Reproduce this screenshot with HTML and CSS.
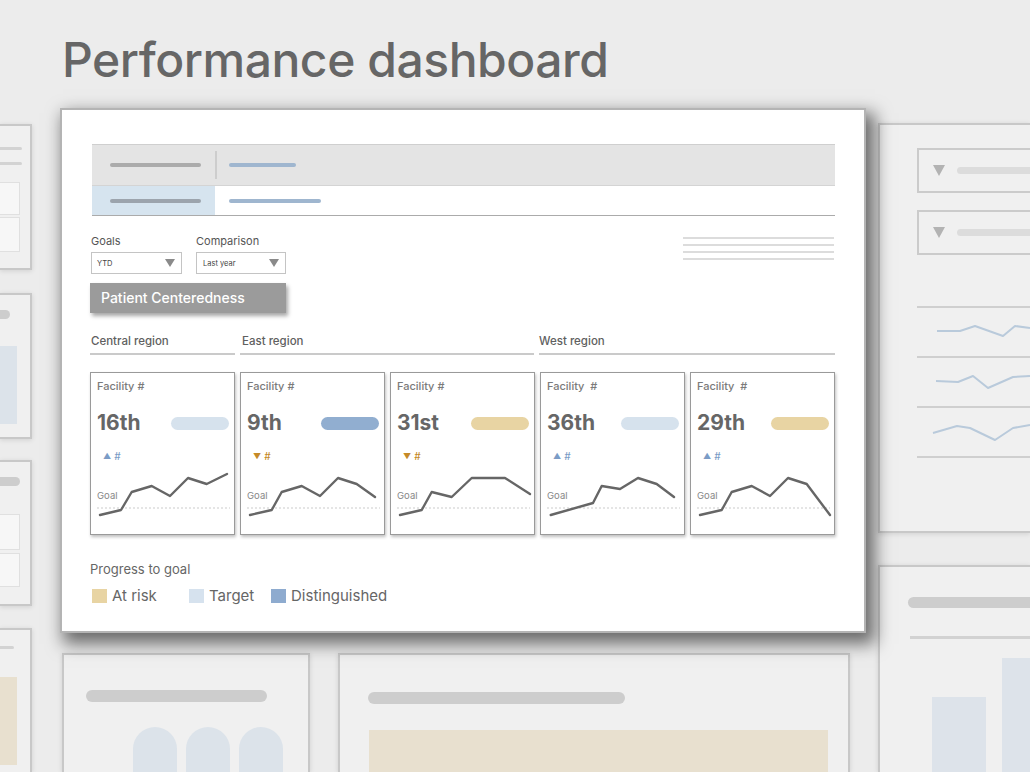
FILE: index.html
```html
<!DOCTYPE html>
<html lang="en">

<head>
    <meta charset="UTF-8">
    <meta name="viewport" content="width=device-width, initial-scale=1.0">
    <title>Performance dashboard</title>
    <link rel="stylesheet" href="styles.css">
</head>

<body>
    <!-- background windows -->
    <div class="ghost ghost-left ghost-l1">
        <span class="g-line"></span>
        <span class="g-line"></span>
        <span class="g-box g-box-a"></span>
        <span class="g-box g-box-b"></span>
    </div>
    <div class="ghost ghost-left ghost-l2">
        <span class="g-pill"></span>
        <span class="g-fill g-fill-blue"></span>
    </div>
    <div class="ghost ghost-left ghost-l3">
        <span class="g-pill"></span>
        <span class="g-box g-box-c"></span>
        <span class="g-box g-box-d"></span>
    </div>
    <div class="ghost ghost-left ghost-l4">
        <span class="g-line"></span>
        <span class="g-fill g-fill-tan"></span>
    </div>

    <div class="ghost ghost-right ghost-r1">
        <div class="g-drop"><span class="g-caret"></span><span class="g-drop-bar"></span></div>
        <div class="g-drop"><span class="g-caret"></span><span class="g-drop-bar"></span></div>
        <div class="g-sparks">
            <div class="g-spark-row">
                <svg width="113" height="48" viewBox="0 0 113 48">
                    <polyline points="20,23 43,23 58,18 86,28 98,18 113,20" />
                </svg>
            </div>
            <div class="g-spark-row">
                <svg width="113" height="48" viewBox="0 0 113 48">
                    <polyline points="19,23 41,24 56,18 71,30 96,19 113,18" />
                </svg>
            </div>
            <div class="g-spark-row">
                <svg width="113" height="48" viewBox="0 0 113 48">
                    <polyline points="16,25 40,18 53,20 78,32 96,20 113,17" />
                </svg>
            </div>
        </div>
    </div>
    <div class="ghost ghost-right ghost-bottom ghost-r2">
        <span class="g-pill g-pill-wide"></span>
        <span class="g-rule"></span>
        <div class="g-bars">
            <span class="g-bar g-bar-low"></span>
            <span class="g-bar g-bar-high"></span>
        </div>
    </div>

    <div class="ghost ghost-bottom ghost-b1">
        <span class="g-pill g-pill-title"></span>
        <div class="g-arches">
            <span></span><span></span><span></span>
        </div>
    </div>
    <div class="ghost ghost-bottom ghost-b2">
        <span class="g-pill g-pill-title"></span>
        <span class="g-fill g-fill-wide"></span>
    </div>

    <h1 class="title">Performance dashboard</h1>

    <div class="board">
        <div class="tabs">
            <div class="tab-row tab-row-top">
                <div class="tab-cell"><span class="bar bar-gray"></span></div>
                <span class="tab-sep"></span>
                <span class="bar bar-blue bar-short"></span>
            </div>
            <div class="tab-row tab-row-sub">
                <div class="tab-cell tab-cell-active"><span class="bar bar-slate"></span></div>
                <span class="bar bar-blue bar-long"></span>
            </div>
        </div>

        <div class="filters">
            <div class="filter-group">
                <div class="selects">
                    <div class="field">
                        <span class="field-label">Goals</span>
                        <span class="select">YTD</span>
                    </div>
                    <div class="field field-wide">
                        <span class="field-label">Comparison</span>
                        <span class="select">Last year</span>
                    </div>
                </div>
                <div class="metric-btn">Patient Centeredness</div>
            </div>
            <div class="memo">
                <span></span><span></span><span></span><span></span>
            </div>
        </div>

        <div class="regions">
            <div class="region">Central region</div>
            <div class="region region-2 region-east">East region</div>
            <div class="region region-2 region-west">West region</div>
        </div>

        <div class="cards">
            <div class="card">
                <p class="card-name">Facility #</p>
                <div class="card-rank"><span class="rank">16th</span><span class="pill pill-target"></span></div>
                <p class="card-delta up"><span class="arrow">▲</span>#</p>
                <svg class="spark" width="143" height="62" viewBox="1 98 143 62">
                    <text class="goal-label" x="7" y="128">Goal</text>
                    <line class="goal-line" x1="7" y1="137" x2="140" y2="137" />
                    <polyline class="trend" points="10,144 31,139 41.7,121 61.7,115 80,125 98,107 116.7,113 137,103" />
                </svg>
            </div>
            <div class="card">
                <p class="card-name">Facility #</p>
                <div class="card-rank"><span class="rank">9th</span><span class="pill pill-best"></span></div>
                <p class="card-delta down"><span class="arrow">▼</span>#</p>
                <svg class="spark" width="143" height="62" viewBox="1 98 143 62">
                    <text class="goal-label" x="7" y="128">Goal</text>
                    <line class="goal-line" x1="7" y1="137" x2="140" y2="137" />
                    <polyline class="trend" points="10,144 31.7,139 41.7,121 61.7,115 80,125 98,107 116.7,113 135,126" />
                </svg>
            </div>
            <div class="card">
                <p class="card-name">Facility #</p>
                <div class="card-rank"><span class="rank">31st</span><span class="pill pill-risk"></span></div>
                <p class="card-delta down"><span class="arrow">▼</span>#</p>
                <svg class="spark" width="143" height="62" viewBox="1 98 143 62">
                    <text class="goal-label" x="7" y="128">Goal</text>
                    <line class="goal-line" x1="7" y1="137" x2="140" y2="137" />
                    <polyline class="trend" points="10,144 31.7,139 41.7,121 61.7,126 81.7,107 115,107 140,123" />
                </svg>
            </div>
            <div class="card">
                <p class="card-name">Facility&nbsp; #</p>
                <div class="card-rank"><span class="rank">36th</span><span class="pill pill-target"></span></div>
                <p class="card-delta up"><span class="arrow">▲</span>#</p>
                <svg class="spark" width="143" height="62" viewBox="1 98 143 62">
                    <text class="goal-label" x="7" y="128">Goal</text>
                    <line class="goal-line" x1="7" y1="137" x2="140" y2="137" />
                    <polyline class="trend" points="10.7,144 53,132 61.7,115 80,118 98,107 116.7,113 134,126" />
                </svg>
            </div>
            <div class="card">
                <p class="card-name">Facility&nbsp; #</p>
                <div class="card-rank"><span class="rank">29th</span><span class="pill pill-risk"></span></div>
                <p class="card-delta up"><span class="arrow">▲</span>#</p>
                <svg class="spark" width="143" height="62" viewBox="1 98 143 62">
                    <text class="goal-label" x="7" y="128">Goal</text>
                    <line class="goal-line" x1="7" y1="137" x2="140" y2="137" />
                    <polyline class="trend" points="10,144 31.7,139 41.7,121 61.7,115 80,125 98,107 116.7,113 140,144" />
                </svg>
            </div>
        </div>

        <div class="legend">
            <p class="legend-title">Progress to goal</p>
            <div class="legend-row">
                <span class="legend-item legend-risk"><i class="swatch swatch-risk"></i>At risk</span>
                <span class="legend-item legend-target"><i class="swatch swatch-target"></i>Target</span>
                <span class="legend-item"><i class="swatch swatch-best"></i>Distinguished</span>
            </div>
        </div>
    </div>
</body>

</html>
```

FILE: styles.css
```css
* {
    padding: 0;
    margin: 0;
    box-sizing: border-box;
}

body {
    position: relative;
    width: 1030px;
    height: 772px;
    overflow: hidden;
    padding-top: 32px;
    background-color: #ececec;
    font-family: Inter, "Liberation Sans", sans-serif;
    color: #666;
}

.title {
    position: relative;
    z-index: 2;
    margin: 0 0 20px 62px;
    font-size: 48px;
    line-height: 56px;
    font-weight: 500;
    letter-spacing: -0.45px;
    color: #666;
}

/* background windows, cut off by the frame edges */
.ghost {
    position: absolute;
    z-index: 1;
    display: flex;
    flex-direction: column;
    overflow: hidden;
    background-color: #f0f0f0;
    border: 2px solid #c8c8c8;
    box-shadow: 0 1px 5px rgba(0, 0, 0, .12);
}

.ghost-left {
    left: 0;
    width: 32px;
    border-left: 0;
}

.ghost-right {
    width: 152px;
    border-right: 0;
}

.ghost-bottom {
    height: 119px;
    border-bottom: 0;
}

.ghost span {
    display: block;
    flex-shrink: 0;
}

.g-line {
    height: 3px;
    background-color: #d3d3d3;
    border-radius: 0 2px 2px 0;
}

.g-pill {
    height: 9px;
    background-color: #cdcdcd;
    border-radius: 0 5px 5px 0;
}

.g-box {
    background-color: #f7f7f7;
    border: 1px solid #e0e0e0;
    border-left: 0;
}

.g-fill-blue {
    background-color: #dce3ea;
}

.g-fill-tan {
    background-color: #e8e0cf;
}

.ghost-l1 {
    top: 124px;
    height: 146px;
    padding: 21px 8px 0 0;
}

.ghost-l1 .g-line + .g-line {
    margin-top: 12px;
}

.g-box-a {
    margin: 17px 2px 0 0;
    height: 33px;
}

.g-box-b {
    margin: 2px 2px 0 0;
    height: 35px;
}

.ghost-l2 {
    top: 293px;
    height: 146px;
    padding-top: 15px;
}

.ghost-l2 .g-pill {
    margin-right: 20px;
}

.ghost-l2 .g-fill {
    margin: 27px 13px 0 0;
    height: 78px;
}

.ghost-l3 {
    top: 460px;
    height: 146px;
    padding-top: 15px;
}

.ghost-l3 .g-pill {
    margin-right: 10px;
}

.g-box-c {
    margin: 28px 10px 0 0;
    height: 36px;
}

.g-box-d {
    margin: 3px 10px 0 0;
    height: 34px;
}

.ghost-l4 {
    top: 628px;
    height: 144px;
    padding-top: 16px;
    border-bottom: 0;
}

.ghost-l4 .g-line {
    margin-right: 16px;
}

.ghost-l4 .g-fill {
    margin: 28px 13px 0 0;
    height: 88px;
}

.ghost-r1 {
    left: 878px;
    top: 123px;
    height: 410px;
    padding: 23px 0 0 37px;
}

.g-drop {
    display: flex;
    align-items: center;
    height: 45px;
    padding-left: 14px;
    border: 2px solid #cbcbcb;
    border-right: 0;
}

.g-drop + .g-drop {
    margin-top: 17px;
}

.g-caret {
    width: 0;
    height: 0;
    border-left: 6px solid transparent;
    border-right: 6px solid transparent;
    border-top: 11px solid #b3b3b3;
}

.ghost .g-drop-bar {
    flex: 1;
    height: 7px;
    margin-left: 12px;
    background-color: #dcdcdc;
    border-radius: 4px 0 0 4px;
}

.g-sparks {
    margin-top: 51px;
    border-bottom: 2px solid #cfcfcf;
}

.g-spark-row {
    height: 50px;
    border-top: 2px solid #cfcfcf;
}

.g-spark-row svg {
    display: block;
}

.g-spark-row polyline {
    fill: none;
    stroke: #b9cadb;
    stroke-width: 2;
    stroke-linejoin: round;
}

.ghost-r2 {
    left: 878px;
    top: 565px;
    height: 207px;
    padding-top: 30px;
}

.g-pill-wide {
    height: 11px;
    margin-left: 28px;
    border-radius: 6px 0 0 6px;
}

.g-rule {
    height: 3px;
    margin: 28px 0 0 30px;
    background-color: #d2d2d2;
}

.g-bars {
    display: flex;
    align-items: flex-end;
    gap: 16px;
    height: 120px;
    margin-top: 19px;
    padding-left: 52px;
}

.g-bar {
    background-color: #dde3ea;
}

.ghost .g-bar-low {
    width: 54px;
    height: 81px;
}

.ghost .g-bar-high {
    flex: 1;
    height: 120px;
}

.ghost-b1 {
    left: 62px;
    top: 653px;
    width: 248px;
    padding-top: 35px;
}

.g-pill-title {
    height: 12px;
    border-radius: 6px;
}

.ghost-b1 .g-pill-title {
    width: 181px;
    margin-left: 22px;
}

.g-arches {
    display: flex;
    gap: 9px;
    margin: 25px 0 0 69px;
}

.g-arches span {
    width: 44px;
    height: 60px;
    background-color: #dce3ea;
    border-radius: 22px 22px 0 0;
}

.ghost-b2 {
    left: 338px;
    top: 653px;
    width: 512px;
    padding-top: 37px;
}

.ghost-b2 .g-pill-title {
    width: 257px;
    margin-left: 28px;
}

.g-fill-wide {
    width: 459px;
    height: 60px;
    margin: 26px 0 0 29px;
    background-color: #e8e0cf;
}

/* main board */
.board {
    position: relative;
    z-index: 3;
    width: 806px;
    height: 525px;
    margin-left: 60px;
    padding: 34px 29px 0 28px;
    background-color: #fff;
    border: 2px solid #b4b4b4;
    box-shadow: 6px 8px 16px 3px rgba(0, 0, 0, .55);
}

.tabs {
    margin-left: 2px;
}

.tab-row {
    display: flex;
    align-items: center;
}

.tab-row-top {
    height: 42px;
    background-color: #e4e4e4;
    border-top: 1px solid #cfcfcf;
    border-bottom: 1px solid #d4d4d4;
}

.tab-row-sub {
    height: 30px;
    border-bottom: 1px solid #ababab;
}

.tab-cell {
    display: flex;
    align-items: center;
    align-self: stretch;
    width: 123px;
    padding-left: 18px;
}

.tab-cell-active {
    background-color: #d6e4ef;
}

.tab-sep {
    width: 2px;
    height: 28px;
    background-color: #cdcdcd;
}

.bar {
    display: block;
    height: 4px;
    border-radius: 2px;
}

.bar-gray {
    width: 91px;
    background-color: #ababab;
}

.bar-slate {
    width: 91px;
    background-color: #9ca4ad;
}

.bar-blue {
    background-color: #9fb6cf;
}

.bar-short {
    width: 67px;
    margin-left: 12px;
}

.bar-long {
    width: 92px;
    margin-left: 14px;
}

.filters {
    display: flex;
    justify-content: space-between;
    align-items: flex-start;
    margin-top: 19px;
}

.selects {
    display: flex;
    margin-left: 1px;
}

.field {
    display: flex;
    flex-direction: column;
}

.field-wide {
    margin-left: 14px;
}

.field-label {
    margin-bottom: 4px;
    font-size: 11px;
    line-height: 13px;
    color: #555;
}

.select {
    display: flex;
    align-items: center;
    width: 91px;
    height: 22px;
    padding-left: 5px;
    border: 1px solid #c4c4c4;
    font-size: 7.5px;
    color: #444;
}

.field-wide .select {
    width: 90px;
    padding-left: 6px;
}

.select::after {
    content: "";
    margin: 0 6px 0 auto;
    border-left: 5.5px solid transparent;
    border-right: 5.5px solid transparent;
    border-top: 8px solid #8a8a8a;
}

.metric-btn {
    width: 196px;
    height: 30px;
    margin-top: 9px;
    padding-left: 11px;
    background-color: #9b9b9b;
    box-shadow: 2px 3px 4px rgba(0, 0, 0, .35);
    font-size: 14px;
    font-weight: 500;
    line-height: 30px;
    color: #fff;
}

.memo {
    display: flex;
    flex-direction: column;
    gap: 5px;
    margin: 2px 1px 0 0;
}

.memo span {
    display: block;
    width: 151px;
    height: 2px;
    background-color: #dcdcdc;
}

.regions,
.cards {
    display: grid;
    grid-template-columns: repeat(5, 145px);
    gap: 5px;
}

.regions {
    margin-top: 21px;
}

.region {
    padding: 0 0 5px 1px;
    border-bottom: 2px solid #cacaca;
    font-size: 11.5px;
    line-height: 14px;
    font-weight: 500;
    color: #606060;
}

.region-2 {
    grid-column: span 2;
}

.region-east {
    padding-left: 2px;
    margin-right: 1px;
}

.region-west {
    padding-left: 0;
    margin-left: -1px;
}

.cards {
    margin-top: 17px;
}

.card {
    height: 163px;
    padding-top: 6px;
    background-color: #fff;
    border: 1px solid #9a9a9a;
    box-shadow: 1px 2px 3px rgba(0, 0, 0, .25);
}

.card-name {
    padding-left: 6px;
    font-size: 11px;
    line-height: 14px;
    font-weight: 500;
    color: #7a7a7a;
}

.card-rank {
    display: flex;
    justify-content: space-between;
    align-items: center;
    height: 26px;
    margin-top: 17px;
    padding: 0 5px 0 6px;
}

.rank {
    font-size: 21px;
    line-height: 26px;
    font-weight: 700;
    color: #666;
}

.pill {
    display: block;
    width: 58px;
    height: 13px;
    border-radius: 7px;
}

.pill-target {
    background-color: #d6e2ed;
}

.pill-best {
    background-color: #91aed0;
}

.pill-risk {
    background-color: #e8d4a3;
}

.card-delta {
    display: flex;
    align-items: center;
    gap: 3px;
    height: 12px;
    margin-top: 14px;
    padding-left: 12px;
    font-size: 10px;
    line-height: 12px;
    font-weight: 500;
}

.card-delta .arrow {
    font-size: 8px;
}

.up {
    color: #7b9cc6;
}

.down {
    color: #c58a28;
}

.spark {
    display: block;
    margin-top: 7px;
}

.goal-label {
    font-family: Inter, "Liberation Sans", sans-serif;
    font-size: 9.5px;
    fill: #888;
}

.goal-line {
    stroke: #cbcbcb;
    stroke-width: 1;
    stroke-dasharray: 2 2;
}

.trend {
    fill: none;
    stroke: #666;
    stroke-width: 2.4;
    stroke-linejoin: round;
    stroke-linecap: round;
}

.legend {
    margin-top: 26px;
}

.legend-title {
    font-size: 13px;
    line-height: 16px;
    color: #666;
}

.legend-row {
    display: flex;
    margin: 11px 0 0 2px;
}

.legend-item {
    display: flex;
    align-items: center;
    gap: 5px;
    font-size: 15px;
    line-height: 16px;
    color: #666;
}

.legend-risk {
    width: 97px;
}

.legend-target {
    width: 82px;
}

.swatch {
    display: block;
    width: 15px;
    height: 14px;
}

.swatch-risk {
    background-color: #e8d4a3;
}

.swatch-target {
    background-color: #d6e2ee;
}

.swatch-best {
    background-color: #8eabcf;
}
```
